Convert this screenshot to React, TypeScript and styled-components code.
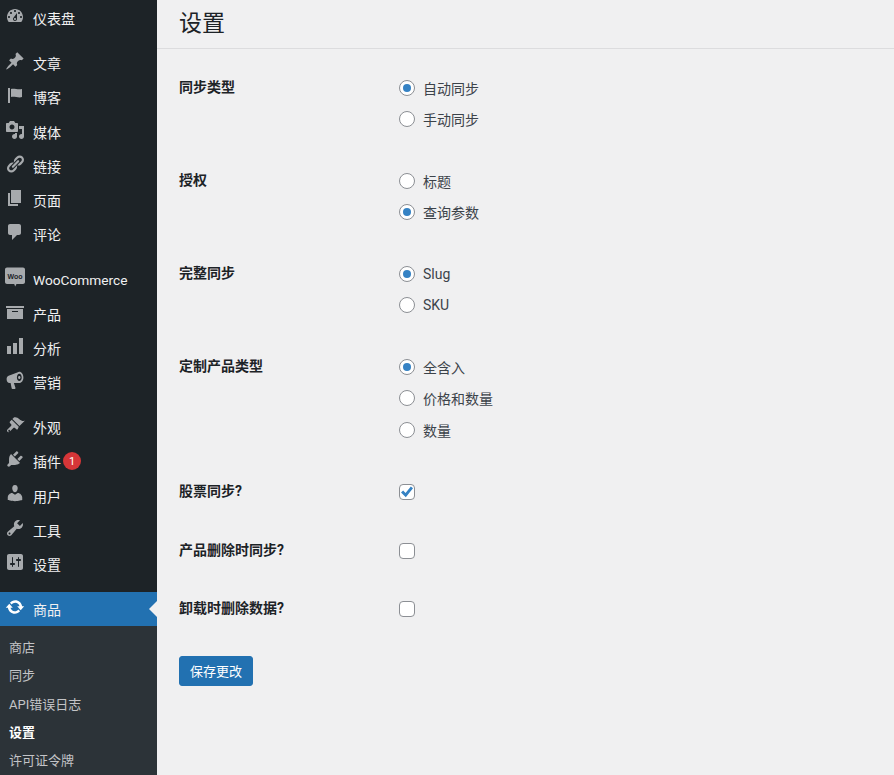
import React from "react";
import styled, { createGlobalStyle } from "styled-components";

const GlobalStyle = createGlobalStyle`
  html, body {
    margin: 0;
    height: 100%;
    overflow: hidden;
    background: #f0f0f1;
    font-family: Roboto, "Noto Sans CJK SC", sans-serif;
  }
  * { box-sizing: border-box; }
`;

const Page = styled.div`
  display: flex;
  height: 775px;
  overflow: hidden;
`;

const Sidebar = styled.nav`
  width: 157px;
  flex: none;
  padding-top: 1px;
  background: #1d2327;
`;

const Group = styled.div`
  margin-bottom: 11px;
`;

const MenuItem = styled.a<{ $current?: boolean; $latin?: boolean }>`
  position: relative;
  display: flex;
  align-items: center;
  height: 34.2px;
  padding-left: 33px;
  padding-top: ${(p) => (p.$latin ? "2px" : "0")};
  color: #f0f0f1;
  font-size: ${(p) => (p.$latin ? "13.7px" : "14px")};
  background: ${(p) => (p.$current ? "#2271b1" : "transparent")};
  ${(p) =>
    p.$current &&
    `&::after {
      content: "";
      position: absolute;
      right: 0;
      top: 9px;
      border: 8px solid transparent;
      border-right-color: #f0f0f1;
      border-left: 0;
    }`}
`;

const IconSlot = styled.svg<{ $current?: boolean }>`
  position: absolute;
  left: 5px;
  top: 5px;
  width: 20px;
  height: 20px;
  fill: ${(p) => (p.$current ? "#fff" : "#a7aaad")};
  path {
    fill-rule: evenodd;
  }
`;

const Badge = styled.span`
  display: flex;
  align-items: center;
  justify-content: center;
  width: 18px;
  height: 18px;
  margin-left: 2px;
  border-radius: 50%;
  background: #d63638;
  color: #fff;
  font-size: 11px;
`;

const Submenu = styled.div`
  padding: 6.2px 0;
  background: #2c3338;
`;

const SubItem = styled.a<{ $current?: boolean }>`
  display: flex;
  align-items: center;
  height: 28.3px;
  padding-left: 9px;
  font-size: 13px;
  color: ${(p) => (p.$current ? "#fff" : "#c3c4c7")};
  font-weight: ${(p) => (p.$current ? 700 : 400)};
`;

const Main = styled.main`
  flex: 1;
  min-width: 0;
`;

const TitleBar = styled.header`
  height: 49px;
  padding-left: 22px;
  border-bottom: 1px solid #dcdcde;
`;

const Title = styled.h1`
  margin: 0;
  font-size: 23px;
  font-weight: 400;
  line-height: 48px;
  color: #1d2327;
`;

const Form = styled.form`
  padding: 23.2px 0 0 22px;
`;

const Row = styled.div<{ $pad: number }>`
  display: grid;
  grid-template-columns: 220px 1fr;
  padding-bottom: ${(p) => p.$pad}px;
`;

const RowLabel = styled.div`
  font-size: 14px;
  font-weight: 700;
  line-height: 31px;
  color: #1d2327;
`;

const Option = styled.label`
  display: flex;
  align-items: center;
  gap: 8px;
  height: 31.4px;
  font-size: 14px;
  color: #3c434a;
`;

const Radio = styled.input.attrs({ type: "radio" })`
  appearance: none;
  display: flex;
  align-items: center;
  justify-content: center;
  width: 16px;
  height: 16px;
  margin: 0;
  border: 1px solid #8c8f94;
  border-radius: 50%;
  background: #fff;
  &:checked::before {
    content: "";
    width: 8px;
    height: 8px;
    border-radius: 50%;
    background: #3582c4;
  }
`;

const Checkbox = styled.input.attrs({ type: "checkbox" })`
  appearance: none;
  display: flex;
  align-items: center;
  justify-content: center;
  width: 16px;
  height: 16px;
  margin: 0;
  border: 1px solid #8c8f94;
  border-radius: 4px;
  background: #fff;
  &:checked::before {
    content: "";
    width: 12px;
    height: 12px;
    background: #3582c4;
    clip-path: polygon(0 55%, 18% 38%, 38% 58%, 82% 5%, 100% 20%, 40% 95%);
  }
`;

const SaveButton = styled.button`
  width: 74px;
  height: 30px;
  margin-top: 3.7px;
  padding: 0;
  border: 1px solid #2271b1;
  border-radius: 3px;
  background: #2271b1;
  color: #fff;
  font-family: inherit;
  font-size: 13px;
`;

const icons: Record<string, string> = {
  dashboard:
    "M3.76 16h12.48c1.1-1.37 1.76-3.11 1.76-5 0-4.42-3.58-8-8-8s-8 3.58-8 8c0 1.89.66 3.63 1.76 5zM10 4c.55 0 1 .45 1 1s-.45 1-1 1-1-.45-1-1 .45-1 1-1zM6 6c.55 0 1 .45 1 1s-.45 1-1 1-1-.45-1-1 .45-1 1-1zm8 0c.55 0 1 .45 1 1s-.45 1-1 1-1-.45-1-1 .45-1 1-1zm-5.37 5.55L12 7v6c0 1.1-.9 2-2 2s-2-.9-2-2c0-.57.24-1.08.63-1.45zM4 10c.55 0 1 .45 1 1s-.45 1-1 1-1-.45-1-1 .45-1 1-1zm12 0c.55 0 1 .45 1 1s-.45 1-1 1-1-.45-1-1 .45-1 1-1zm-5 3c0-.55-.45-1-1-1s-1 .45-1 1 .45 1 1 1 1-.45 1-1z",
  post:
    "M10.44 3.02l1.82-1.82 6.36 6.35-1.83 1.82c-1.05-.68-2.48-.57-3.41.36l-.75.75c-.92.93-1.04 2.35-.35 3.41l-1.83 1.82-2.41-2.41-2.8 2.79c-.42.42-3.38 2.71-3.8 2.29s1.86-3.39 2.28-3.81l2.79-2.79L4.1 9.36l1.83-1.82c1.05.69 2.48.57 3.4-.36l.75-.75c.93-.92 1.05-2.35.36-3.41z",
  flag: "M5 18V3H3v15h2zm1-6V4c3-1 7 1 11 0v8c-3 1.27-8-1-11 0z",
  media:
    "M13 11V4c0-.55-.45-1-1-1h-1.67L9 1H5L3.67 3H2c-.55 0-1 .45-1 1v7c0 .55.45 1 1 1h10c.55 0 1-.45 1-1zM7 4.5c1.38 0 2.5 1.12 2.5 2.5S8.38 9.5 7 9.5 4.5 8.38 4.5 7 5.62 4.5 7 4.5zM14 6h5v10.5c0 1.38-1.12 2.5-2.5 2.5S14 17.88 14 16.5s1.12-2.5 2.5-2.5c.17 0 .34.02.5.05V9h-3V6zm-4 8.05V13h2v3.5c0 1.38-1.12 2.5-2.5 2.5S7 17.88 7 16.5 8.12 14 9.5 14c.17 0 .34.02.5.05z",
  links:
    "M17.74 2.76c1.68 1.69 1.68 4.41 0 6.1l-1.53 1.52c-1.12 1.12-2.7 1.47-4.14 1.09l2.62-2.61.76-.77.76-.76c.84-.84.84-2.2 0-3.04-.84-.85-2.2-.85-3.04 0l-.77.76-3.38 3.38c-.37-1.44-.02-3.02 1.1-4.14l1.52-1.53c1.69-1.68 4.42-1.68 6.1 0zM8.59 13.43l5.34-5.34c.42-.42.42-1.1 0-1.52-.44-.43-1.13-.39-1.53 0l-5.33 5.34c-.42.42-.42 1.1 0 1.52.44.43 1.13.39 1.52 0zm-.76 2.29l4.14-4.15c.38 1.44.03 3.02-1.09 4.14l-1.52 1.53c-1.69 1.68-4.41 1.68-6.1 0-1.68-1.68-1.68-4.42 0-6.1l1.53-1.52c1.12-1.12 2.7-1.47 4.14-1.1l-4.14 4.15c-.85.84-.85 2.2 0 3.05.84.84 2.2.84 3.04 0z",
  page: "M6 15V2h10v13H6zm-1 1h8v2H3V5h2v11z",
  comments:
    "M5 2h9c1.1 0 2 .9 2 2v7c0 1.1-.9 2-2 2h-2l-5 5v-5H5c-1.1 0-2-.9-2-2V4c0-1.1.9-2 2-2z",
  archive: "M19 4v2H1V4h18zM2 7h16v10H2V7zm11 3V9H7v1h6z",
  chart: "M18 18V2h-4v16h4zm-6 0V7H8v11h4zm-6 0v-8H2v8h4z",
  megaphone:
    "M14.3 1.800c2.300 0 4.100 2.600 4.100 5.700s-1.800 5.500-4.100 5.500H8.900l1.600 5.100c.1.400-.2.900-.6.900H7.400c-.3 0-.6-.2-.7-.5L5.600 13H4.400C2.900 13 1.600 11.400 1.600 9.300c0-1.700.8-3 2-3.500l8.700-3.400c.6-.4 1.300-.6 2-.6zM14.300 3.800c-1.300 0-2.400 1.700-2.400 3.700s1.100 3.600 2.400 3.600 2.400-1.600 2.400-3.600-1.100-3.700-2.400-3.700zM14.300 6c.7 0 1.200.7 1.200 1.500s-.5 1.500-1.200 1.500-1.200-.7-1.200-1.500.5-1.500 1.200-1.500z",
  appearance:
    "M14.48 11.06L7.41 3.99l1.5-1.5c.5-.56 2.3-.47 3.51.32 1.21.8 1.43 1.28 2.91 2.1 1.18.64 2.45 1.26 4.45.85zm-.71.71L6.7 4.7 4.93 6.47c-.39.39-.39 1.02 0 1.41l1.06 1.06c.59.58.59 1.53 0 2.12l-3.53 3.53c-.59.59-.59 1.54 0 2.12.59.59 1.54.59 2.12 0l3.53-3.53c.59-.59 1.54-.59 2.12 0l1.06 1.06c.39.39 1.02.39 1.41 0zM4.87 16.54c-.39.39-1.02.39-1.41 0-.39-.39-.39-1.02 0-1.41.39-.39 1.02-.39 1.41 0 .39.39.39 1.02 0 1.41z",
  plugins:
    "M13.11 4.36L9.87 7.6 8 5.73l3.24-3.24c.35-.34 1.05-.2 1.56.32.52.51.66 1.21.31 1.55zm-8 1.77l.91-1.12 9.01 9.01-1.19.84c-.71.71-2.63 1.16-3.82 1.16H6.14L4.9 17.26c-.59.59-1.54.59-2.12 0-.59-.58-.59-1.53 0-2.12l1.24-1.24v-3.88c0-1.13.4-3.19 1.09-3.89zm7.26 3.97l3.24-3.24c.34-.35 1.04-.21 1.55.31.52.51.66 1.21.31 1.55l-3.24 3.25z",
  users:
    "M10 9.25c-2.27 0-2.73-3.44-2.73-3.44C7 4.02 7.82 2 9.97 2c2.16 0 2.98 2.02 2.71 3.81 0 0-.41 3.44-2.68 3.44zm0 2.57L12.72 10c2.39 0 4.52 2.33 4.52 4.53v2.49s-3.65 1.13-7.24 1.13c-3.65 0-7.24-1.13-7.24-1.13v-2.49c0-2.25 1.94-4.48 4.47-4.48z",
  tools:
    "M16.68 9.77c-1.34 1.34-3.3 1.67-4.95.99l-5.41 6.52c-.99.99-2.59.99-3.58 0s-.99-2.59 0-3.57l6.52-5.42c-.68-1.65-.35-3.61.99-4.95 1.28-1.28 3.12-1.62 4.72-1.06l-2.89 2.89 2.82 2.82 2.86-2.87c.53 1.58.18 3.39-1.08 4.65zM3.81 16.21c.4.39 1.04.39 1.43 0 .4-.4.4-1.04 0-1.43-.39-.4-1.03-.4-1.43 0-.39.39-.39 1.03 0 1.43z",
  settings:
    "M18 16V4c0-1.1-.9-2-2-2H4c-1.1 0-2 .9-2 2v12c0 1.1.9 2 2 2h12c1.1 0 2-.9 2-2zM8 11h1c.55 0 1 .45 1 1s-.45 1-1 1H8v1.5c0 .28-.22.5-.5.5s-.5-.22-.5-.5V13H6c-.55 0-1-.45-1-1s.45-1 1-1h1V5.5c0-.28.22-.5.5-.5s.5.22.5.5V11zm5-2h-1c-.55 0-1-.45-1-1s.45-1 1-1h1V5.5c0-.28.22-.5.5-.5s.5.22.5.5V7h1c.55 0 1 .45 1 1s-.45 1-1 1h-1v5.5c0 .28-.22.5-.5.5s-.5-.22-.5-.5V9z",
  update:
    "M10.2 3.28c3.53 0 6.43 2.61 6.92 6h2.08l-3.5 4-3.5-4h2.32c-.45-1.97-2.21-3.45-4.32-3.45-1.45 0-2.73.71-3.54 1.78L4.95 5.66C6.23 4.2 8.11 3.28 10.2 3.28zm-.4 13.44c-3.52 0-6.43-2.61-6.92-6H.8l3.5-4c1.17 1.33 2.33 2.67 3.5 4H5.48c.45 1.97 2.21 3.45 4.32 3.45 1.45 0 2.73-.71 3.54-1.78l1.71 1.95c-1.28 1.46-3.15 2.38-5.25 2.38z",
};

const WooText = styled.text`
  font-family: "Liberation Sans", sans-serif;
  font-size: 7px;
  font-weight: 700;
  fill: #1d2327;
`;

function MenuIcon({ name, current }: { name: string; current?: boolean }) {
  if (name === "woo") {
    return (
      <IconSlot viewBox="0 0 20 20" $current={current}>
        <path d="M2 .5h16c1.100 0 2 .9 2 2v12.500c0 1.100-.9 2-2 2h-6.500l-1.300 2.500-1-2.500H2c-1.100 0-2-.9-2-2V2.500c0-1.100.9-2 2-2z" />
        <WooText x="10" y="11.500" textAnchor="middle">Woo</WooText>
      </IconSlot>
    );
  }
  return (
    <IconSlot viewBox="0 0 20 20" $current={current}>
      <path d={icons[name]} />
    </IconSlot>
  );
}

const groups = [
  [{ icon: "dashboard", label: "仪表盘" }],
  [
    { icon: "post", label: "文章" },
    { icon: "flag", label: "博客" },
    { icon: "media", label: "媒体" },
    { icon: "links", label: "链接" },
    { icon: "page", label: "页面" },
    { icon: "comments", label: "评论" },
  ],
  [
    { icon: "woo", label: "WooCommerce", latin: true },
    { icon: "archive", label: "产品" },
    { icon: "chart", label: "分析" },
    { icon: "megaphone", label: "营销" },
  ],
  [
    { icon: "appearance", label: "外观" },
    { icon: "plugins", label: "插件", badge: 1 },
    { icon: "users", label: "用户" },
    { icon: "tools", label: "工具" },
    { icon: "settings", label: "设置" },
  ],
];

const subItems = ["商店", "同步", "API错误日志", "设置", "许可证令牌"];

const settings = [
  { label: "同步类型", name: "type", options: ["自动同步", "手动同步"], checked: 0, pad: 30.2 },
  { label: "授权", name: "auth", options: ["标题", "查询参数"], checked: 1, pad: 30.2 },
  { label: "完整同步", name: "full", options: ["Slug", "SKU"], checked: 0, pad: 30.2 },
  { label: "定制产品类型", name: "custom", options: ["全含入", "价格和数量", "数量"], checked: 0, pad: 31 },
];

const toggles = [
  { label: "股票同步?", checked: true },
  { label: "产品删除时同步?", checked: false },
  { label: "卸载时删除数据?", checked: false },
];

export default function App() {
  return (
    <Page>
      <GlobalStyle />
      <Sidebar>
        {groups.map((group, i) => (
          <Group key={i}>
            {group.map((item) => (
              <MenuItem key={item.label} $latin={item.latin}>
                <MenuIcon name={item.icon} />
                {item.label}
                {item.badge && <Badge>{item.badge}</Badge>}
              </MenuItem>
            ))}
          </Group>
        ))}
        <MenuItem $current>
          <MenuIcon name="update" current />
          商品
        </MenuItem>
        <Submenu>
          {subItems.map((label) => (
            <SubItem key={label} $current={label === "设置"}>
              {label}
            </SubItem>
          ))}
        </Submenu>
      </Sidebar>
      <Main>
        <TitleBar>
          <Title>设置</Title>
        </TitleBar>
        <Form onSubmit={(e) => e.preventDefault()}>
          {settings.map((row) => (
            <Row key={row.name} $pad={row.pad}>
              <RowLabel>{row.label}</RowLabel>
              <div>
                {row.options.map((opt, i) => (
                  <Option key={opt}>
                    <Radio name={row.name} defaultChecked={i === row.checked} />
                    {opt}
                  </Option>
                ))}
              </div>
            </Row>
          ))}
          {toggles.map((row) => (
            <Row key={row.label} $pad={27.2}>
              <RowLabel>{row.label}</RowLabel>
              <Option>
                <Checkbox defaultChecked={row.checked} />
              </Option>
            </Row>
          ))}
          <SaveButton type="submit">保存更改</SaveButton>
        </Form>
      </Main>
    </Page>
  );
}
